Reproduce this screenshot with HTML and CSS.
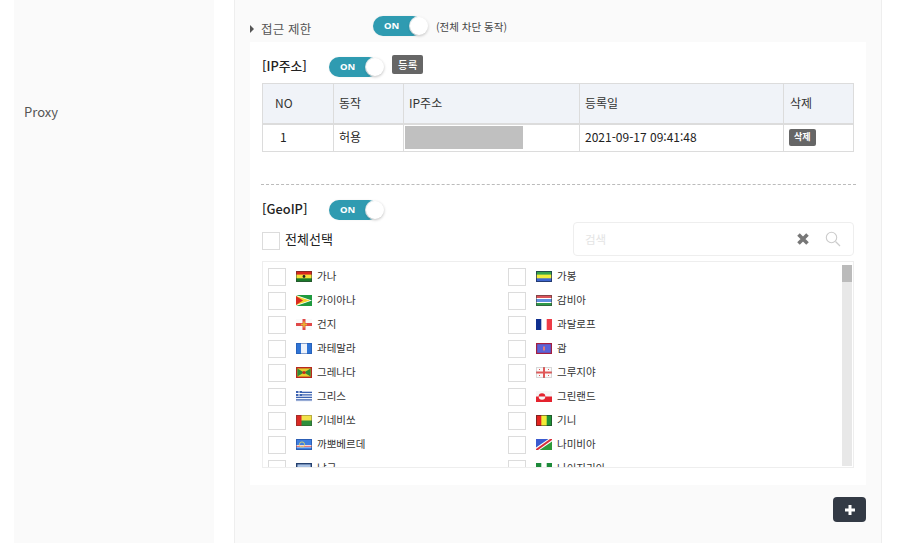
FILE: index.html
```html
<!DOCTYPE html>
<html lang="ko">
<head>
<meta charset="utf-8">
<title>Proxy</title>
<link rel="stylesheet" href="styles.css">
</head>
<body>
<div class="page">
  <aside class="side">Proxy</aside>
  <main class="panel">
    <div class="access-row">
      <span class="arrow"></span>
      <span class="access-label">접근 제한</span>
      <span class="toggle"><span class="toggle-text">ON</span><span class="knob"></span></span>
      <span class="access-note">(전체 차단 동작)</span>
    </div>
    <section class="card">
      <div class="ip-head">
        <strong class="sec-title">[IP주소]</strong>
        <span class="toggle"><span class="toggle-text">ON</span><span class="knob"></span></span>
        <span class="btn-reg">등록</span>
      </div>
      <table class="ip-table">
        <thead>
          <tr><th class="c-no">NO</th><th class="c-act">동작</th><th class="c-ip">IP주소</th><th class="c-date">등록일</th><th class="c-del">삭제</th></tr>
        </thead>
        <tbody>
          <tr><td class="num">1</td><td>허용</td><td class="masked-cell"><span class="masked"></span></td><td>2021-09-17 09:41:48</td><td><span class="btn-del">삭제</span></td></tr>
        </tbody>
      </table>
      <hr class="dash">
      <div class="geo-head">
        <strong class="sec-title">[GeoIP]</strong>
        <span class="toggle"><span class="toggle-text">ON</span><span class="knob"></span></span>
      </div>
      <div class="tools">
        <label class="all"><span class="check check-all"></span><span class="all-text">전체선택</span></label>
        <div class="search">
          <span class="placeholder">검색</span>
          <svg class="ico-x" viewBox="0 0 12 12" width="12" height="12"><path d="M1.5 1.5 L10.5 10.5 M10.5 1.5 L1.5 10.5" stroke="#777" stroke-width="3.6" fill="none"/></svg>
          <svg class="ico-search" viewBox="0 0 16 16" width="16" height="16"><circle cx="6.5" cy="6.5" r="5.2" fill="none" stroke="#ccc" stroke-width="1.1"/><path d="M10.5 10.5 L15 15" stroke="#ccc" stroke-width="1.2"/></svg>
        </div>
      </div>
      <div class="list-box">
        <div class="list">
          <div class="item"><span class="check"></span><svg class="flag" viewBox="0 0 16 11"><rect width="16" height="11" fill="#1a7a2a"/><rect width="16" height="7.3" fill="#f4e23a"/><rect width="16" height="3.6" fill="#d8261c"/><circle cx="8" cy="5.5" r="1.4" fill="#222"/><rect x=".5" y=".5" width="15" height="10" fill="none" stroke="#333" stroke-opacity=".45"/></svg><span class="name">가나</span></div>
          <div class="item"><span class="check"></span><svg class="flag" viewBox="0 0 16 11"><rect width="16" height="11" fill="#3d66cf"/><rect width="16" height="7.3" fill="#f2ee3c"/><rect width="16" height="3.6" fill="#35a34a"/><rect x=".5" y=".5" width="15" height="10" fill="none" stroke="#1a2a4a" stroke-opacity=".7"/></svg><span class="name">가봉</span></div>

          <div class="item"><span class="check"></span><svg class="flag" viewBox="0 0 16 11"><rect width="16" height="11" fill="#1f9a3f"/><path d="M0 0 L16 5.5 L0 11Z" fill="#fff"/><path d="M0 1 L14 5.5 L0 10Z" fill="#f4d32c"/><path d="M0 1 L7 5.5 L0 10Z" fill="#d92a20"/></svg><span class="name">가이아나</span></div>
          <div class="item"><span class="check"></span><svg class="flag" viewBox="0 0 16 11"><rect width="16" height="11" fill="#2f9a48"/><rect y="0" width="16" height="3" fill="#d9535a"/><rect y="3" width="16" height="5" fill="#fff"/><rect y="4" width="16" height="3" fill="#5f8fe0"/><rect x=".5" y=".5" width="15" height="10" fill="none" stroke="#333" stroke-opacity=".5"/></svg><span class="name">감비아</span></div>

          <div class="item"><span class="check"></span><svg class="flag" viewBox="0 0 16 11"><rect width="16" height="11" fill="#fafafa"/><rect x="6.5" width="3" height="11" fill="#e04848"/><rect y="4" width="16" height="3" fill="#e04848"/><rect x="7.2" y="2.5" width="1.6" height="6" fill="#e8b030"/><rect x="5" y="4.7" width="6" height="1.6" fill="#e8b030"/></svg><span class="name">건지</span></div>
          <div class="item"><span class="check"></span><svg class="flag" viewBox="0 0 16 11"><rect width="16" height="11" fill="#fff"/><rect width="5.3" height="11" fill="#0f2f8f"/><rect x="10.7" width="5.3" height="11" fill="#ee3b45"/></svg><span class="name">과달로프</span></div>

          <div class="item"><span class="check"></span><svg class="flag" viewBox="0 0 16 11"><rect width="16" height="11" fill="#eef3fb"/><rect width="5" height="11" fill="#2f74d6"/><rect x="11" width="5" height="11" fill="#2f74d6"/><rect x=".5" y=".5" width="15" height="10" fill="none" stroke="#1f4f9f" stroke-opacity=".5"/></svg><span class="name">과테말라</span></div>
          <div class="item"><span class="check"></span><svg class="flag" viewBox="0 0 16 11"><rect width="16" height="11" fill="#a51f3f"/><rect x="1.2" y="1.2" width="13.6" height="8.6" fill="#5a62d8"/><rect x="7" y="3.5" width="2" height="4" fill="#e07a7a"/></svg><span class="name">괌</span></div>

          <div class="item"><span class="check"></span><svg class="flag" viewBox="0 0 16 11"><rect width="16" height="11" fill="#b8281e"/><rect x="1.4" y="1.4" width="13.2" height="8.2" fill="#e6cf2e"/><path d="M1.4 1.4 L8 5.5 L1.4 9.6Z M14.6 1.4 L8 5.5 L14.6 9.6Z" fill="#2f8a3a"/><circle cx="8" cy="5.5" r="1.6" fill="#c8281e"/></svg><span class="name">그레나다</span></div>
          <div class="item"><span class="check"></span><svg class="flag" viewBox="0 0 16 11"><rect width="16" height="11" fill="#fafafa"/><rect x="7" width="2" height="11" fill="#e05858"/><rect y="4.5" width="16" height="2" fill="#e05858"/><path d="M3 2h1v1H3zM12 2h1v1h-1zM3 8h1v1H3zM12 8h1v1h-1z" fill="#e05858"/><rect x=".5" y=".5" width="15" height="10" fill="none" stroke="#999" stroke-opacity=".35"/></svg><span class="name">그루지야</span></div>

          <div class="item"><span class="check"></span><svg class="flag" viewBox="0 0 16 11"><rect width="16" height="11" fill="#f2f5fb"/><path d="M0 1.3h16M0 3.8h16M0 6.3h16M0 8.8h16" stroke="#3c62b0" stroke-width="1.2"/><rect width="6" height="5" fill="#3c62b0"/><path d="M3 0v5M0 2.5h6" stroke="#fff"/></svg><span class="name">그리스</span></div>
          <div class="item"><span class="check"></span><svg class="flag" viewBox="0 0 16 11"><rect width="16" height="5.5" fill="#f6f6f6"/><rect y="5.5" width="16" height="5.5" fill="#e4232e"/><circle cx="6" cy="5.5" r="3.3" fill="#e4232e"/><path d="M2.7 5.5a3.3 3.3 0 0 0 6.6 0z" fill="#f6f6f6"/></svg><span class="name">그린랜드</span></div>

          <div class="item"><span class="check"></span><svg class="flag" viewBox="0 0 16 11"><rect width="16" height="11" fill="#2f8f3c"/><rect width="16" height="5.5" fill="#f2e24a"/><rect width="5.5" height="11" fill="#d92a24"/><rect x=".5" y=".5" width="15" height="10" fill="none" stroke="#333" stroke-opacity=".3"/></svg><span class="name">기네비쏘</span></div>
          <div class="item"><span class="check"></span><svg class="flag" viewBox="0 0 16 11"><rect width="16" height="11" fill="#f2ec38"/><rect width="5.3" height="11" fill="#e2231f"/><rect x="10.7" width="5.3" height="11" fill="#1e9236"/><rect x=".5" y=".5" width="15" height="10" fill="none" stroke="#222" stroke-opacity=".5"/></svg><span class="name">기니</span></div>

          <div class="item"><span class="check"></span><svg class="flag" viewBox="0 0 16 11"><rect width="16" height="11" fill="#3f7fe0"/><rect y="6" width="16" height="2.4" fill="#fff"/><rect y="6.8" width="16" height=".9" fill="#d8434a"/><circle cx="6" cy="5.5" r="2.6" fill="none" stroke="#e8e060" stroke-width=".8"/><rect x=".5" y=".5" width="15" height="10" fill="none" stroke="#1a3f8a" stroke-opacity=".5"/></svg><span class="name">까뽀베르데</span></div>
          <div class="item"><span class="check"></span><svg class="flag" viewBox="0 0 16 11"><rect width="16" height="11" fill="#2f9a3a"/><path d="M0 0H13L0 9Z" fill="#3b5bd0"/><path d="M0 11 L0 8.5 L12.5 0 L16 0 L16 2.5 L3.5 11Z" fill="#fff"/><path d="M0 11 L0 10 L14 0 L16 0 L16 1 L2 11Z" fill="#d8303a"/></svg><span class="name">나미비아</span></div>

          <div class="item"><span class="check"></span><svg class="flag" viewBox="0 0 16 11"><rect width="16" height="11" fill="#24406f"/><rect x="1.4" y="1.4" width="13.2" height="8.2" fill="#a9c2e4"/></svg><span class="name">남극</span></div>
          <div class="item"><span class="check"></span><svg class="flag" viewBox="0 0 16 11"><rect width="16" height="11" fill="#fff"/><rect width="5.3" height="11" fill="#1d8a3a"/><rect x="10.7" width="5.3" height="11" fill="#1d8a3a"/></svg><span class="name">나이지리아</span></div>
        </div>
        <div class="scrollbar"><span class="thumb"></span></div>
      </div>
    </section>
    <div class="actions"><span class="btn-plus"><svg viewBox="0 0 10 10" width="10" height="10"><path d="M5 0V10M0 5H10" stroke="#fff" stroke-width="3"/></svg></span></div>
  </main>
</div>
</body>
</html>
```
FILE: styles.css
```css
* { box-sizing: border-box; }
html, body { margin: 0; padding: 0; height: 100%; overflow: hidden; background: #fff; }
body {
  font-family: "Noto Sans CJK KR", "Noto Sans", sans-serif;
  color: #222;
  font-size: 13px;
}
.page {
  display: flex;
  height: 543px;
  padding-left: 14px;
  gap: 20px;
}
.side {
  width: 200px;
  background: #fafafa;
  color: #555;
  font-size: 13px;
  line-height: 20px;
  padding: 102px 0 0 10px;
}
.panel {
  width: 648px;
  background: #fafafa;
  border-left: 1px solid #eeeeee;
  border-right: 1px solid #eeeeee;
  padding: 0 15px 0 15px;
}
.access-row {
  display: flex;
  align-items: center;
  height: 42px;
  padding-top: 7px;
}
.arrow {
  width: 0;
  height: 0;
  border-left: 4px solid #555;
  border-top: 4px solid transparent;
  border-bottom: 4px solid transparent;
  margin: 8px 7px 0 0;
}
.access-label {
  width: 112px;
  font-size: 12.5px;
  color: #555;
  line-height: 20px;
  margin-top: 8px;
  letter-spacing: .2px;
}
.access-note {
  font-size: 10.5px;
  color: #444;
  margin: 4px 0 0 8px;
}
.toggle {
  position: relative;
  display: inline-block;
  width: 50px;
  height: 20px;
  margin-right: 5px;
  border-radius: 10px;
  background: #2f9bb1;
  box-shadow: 0 0 2px rgba(0,0,0,.08);
  flex: none;
}
.access-row .toggle { margin-top: 3px; }
.ip-head .toggle { margin-top: 2px; }
.toggle-text {
  display: block;
  font-size: 9.5px;
  font-weight: 700;
  color: #fff;
  line-height: 20px;
  padding-left: 11px;
  font-family: "Noto Sans", sans-serif;
}
.knob {
  position: absolute;
  top: 1px;
  right: -5px;
  width: 18px;
  height: 18px;
  border-radius: 50%;
  background: #fff;
  box-shadow: 0 1px 3px rgba(0,0,0,.25), 0 0 0 1px rgba(255,255,255,.9);
}
.card {
  background: #fff;
  width: 616px;
  height: 443px;
  padding: 12px 12px 0 12px;
}
.ip-head {
  display: flex;
  align-items: center;
  height: 24px;
}
.sec-title {
  width: 67px;
  font-size: 12.8px;
  font-weight: 500;
  color: #222;
  line-height: 22px;
}
.btn-reg {
  background: #666;
  color: #fff;
  font-size: 10.5px;
  font-weight: 500;
  line-height: 19px;
  height: 19px;
  padding: 0 6px;
  border-radius: 2px;
  margin: -4px 0 0 8px;
}
.ip-table {
  border-collapse: collapse;
  table-layout: fixed;
  width: 591px;
  margin: 5px 0 0 0;
  font-size: 12px;
}
.ip-table th {
  background: #f0f3f8;
  height: 40px;
  font-weight: 400;
  text-align: left;
  padding: 0 5px 2px;
  border: 1px solid #dcdcdc;
  border-bottom-width: 2px;
  color: #333;
}
.ip-table td {
  height: 28px;
  padding: 0 5px 2px;
  border: 1px solid #dcdcdc;
  color: #222;
}
.ip-table th.c-no { padding-left: 12px; }
.ip-table th.c-del { padding-left: 6px; }
.ip-table td.num { padding-left: 17px; }
.c-no { width: 71px; }
.c-act { width: 70px; }
.c-ip { width: 176px; }
.c-date { width: 204px; }
.c-del { width: 70px; }
.ip-table td.masked-cell { padding: 0 1px; }
.masked {
  display: block;
  width: 118px;
  height: 23px;
  background: #c0c0c0;
}
.btn-del {
  display: inline-block;
  background: #666;
  color: #fff;
  font-size: 9px;
  font-weight: 700;
  line-height: 16px;
  height: 17px;
  padding: 0 5px;
  border-radius: 2px;
  vertical-align: middle;
}
.dash {
  border: 0;
  border-top: 1px dashed #bbb;
  width: 595px;
  margin: 32px 0 0 -1px;
  height: 0;
}
.geo-head {
  display: flex;
  align-items: center;
  margin-top: 14px;
  height: 22px;
}
.geo-head .sec-title { margin-top: -2px; }
.tools {
  display: flex;
  justify-content: space-between;
  align-items: flex-start;
  height: 39px;
  margin-top: 1px;
}
.all {
  display: flex;
  align-items: flex-start;
  gap: 5px;
  font-size: 13px;
  color: #222;
  line-height: 18px;
  margin-top: 10px;
}
.all-text { margin-top: -2px; }
.check {
  display: block;
  width: 18px;
  height: 18px;
  border: 1px solid #dcdcdc;
  background: #fff;
  flex: none;
}
.search {
  width: 281px;
  height: 34px;
  border: 1px solid #eeeeee;
  border-radius: 4px;
  display: flex;
  align-items: center;
  padding: 0 12px 0 11px;
}
.placeholder {
  flex: 1;
  font-size: 11.5px;
  color: #e4e4e4;
}
.ico-x { margin-right: 16px; }
.list-box {
  display: flex;
  justify-content: space-between;
  width: 592px;
  height: 207px;
  border: 1px solid #eeeeee;
  overflow: hidden;
  padding: 3px 0 0 5px;
}
.list {
  display: grid;
  grid-template-columns: 240px 240px;
  grid-auto-rows: 24px;
  width: 570px;
}
.item {
  display: flex;
  align-items: center;
  height: 24px;
  font-size: 10.5px;
  color: #333;
}
.flag {
  width: 16px;
  height: 11px;
  margin: 0 5px 2px 10px;
  flex: none;
}
.name { padding-bottom: 4px; }
.scrollbar {
  width: 10px;
  height: 201px;
  margin-right: 1px;
  background: #e8e8e8;
  flex: none;
}
.thumb {
  display: block;
  height: 17px;
  background: #bbb;
}
.actions {
  display: flex;
  justify-content: flex-end;
  width: 616px;
  margin-top: 12px;
}
.btn-plus {
  display: flex;
  align-items: center;
  justify-content: center;
  width: 33px;
  height: 25px;
  border-radius: 4px;
  background: #333a45;
}
```
